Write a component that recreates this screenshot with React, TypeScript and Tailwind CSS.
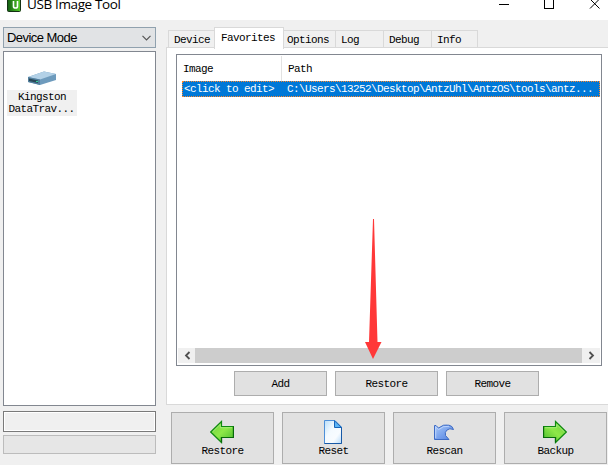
import React from 'react';

const mono = "font-['Liberation_Mono',monospace] text-[11px] leading-[12px] tracking-[-0.6px] whitespace-pre text-black";

function Tab({ label, className }: { label: string; className: string }) {
  return (
    <div className={`h-[18px] border border-b-0 border-[#d9d9d9] pt-[3px] ${mono} ${className}`}>{label}</div>
  );
}

function SmallButton({ label, className }: { label: string; className: string }) {
  return (
    <button className={`flex h-[25px] items-center justify-center border border-[#adadad] bg-[#e1e1e1] ${mono} ${className}`}>
      {label}
    </button>
  );
}

function ActionButton({ label, children }: { label: string; children: React.ReactNode }) {
  return (
    <button className="flex h-[52px] w-[103px] shrink-0 flex-col items-center border border-[#adadad] bg-[#e1e1e1] pt-[7px]">
      <span className="mr-px h-[25px] w-6">{children}</span>
      <span className={mono}>{label}</span>
    </button>
  );
}

function GreenArrow({ flip }: { flip?: boolean }) {
  return (
    <svg width="24" height="24" viewBox="0 0 24 24" className={flip ? '-scale-x-100' : ''}>
      <defs>
        <linearGradient id="green" x1="0" y1="0" x2="1" y2="1">
          <stop offset="0" stopColor="#6ccf3e" />
          <stop offset=".5" stopColor="#8ee848" />
          <stop offset="1" stopColor="#45b82c" />
        </linearGradient>
      </defs>
      <path d="M.7 12 11.5 1.5V6.5H23.5V17.5H11.5V22.5Z" fill="url(#green)" stroke="#108a10" strokeWidth="1.2" />
      <path d="M11.5 22.5V17.5H23.5V6.5" fill="none" stroke="#07680b" strokeWidth="1.2" />
      <path d="M2.5 12 10.3 4.3V7.7H22" fill="none" stroke="#a9ee80" strokeWidth=".8" />
    </svg>
  );
}

function PageIcon() {
  return (
    <svg width="24" height="24" viewBox="0 0 24 24">
      <defs>
        <linearGradient id="page" x1="0" y1="0" x2="1" y2="1">
          <stop offset="0" stopColor="#b9defa" />
          <stop offset=".4" stopColor="#f3faff" />
          <stop offset=".7" stopColor="#f8fcff" />
          <stop offset="1" stopColor="#b5dafa" />
        </linearGradient>
      </defs>
      <path d="M3.5.5H14L20.500 7V23.500H3.500Z" fill="url(#page)" stroke="#4d8fd8" />
      <path d="M20.500 7V23.500H3.500" fill="none" stroke="#1759a6" />
      <path d="M13.500.8V7.500H20.500Z" fill="#5cb4f5" stroke="#1664b9" />
    </svg>
  );
}

function RescanIcon() {
  return (
    <svg width="24" height="24" viewBox="0 0 24 24">
      <defs>
        <linearGradient id="rescan" x1="0" y1="0" x2="1" y2="1">
          <stop offset="0" stopColor="#a9c9fa" />
          <stop offset="1" stopColor="#4f7fdf" />
        </linearGradient>
      </defs>
      <path
        d="M2.500 5.500H4L6.500 8Q11.500 3.800 17 5.200Q20.500 5.800 21.500 9.500Q17.500 7.800 15 10Q12.500 12 13.500 15.500L17 19.500H2.500Z"
        fill="url(#rescan)" stroke="#3e6bc4"
      />
      <path d="M3.700 18V7L6.500 9.600Q11 5.500 17 6.300" fill="none" stroke="#c6dcff" strokeWidth=".8" />
    </svg>
  );
}

export default function App() {
  return (
    <div className="relative flex h-[465px] w-[608px] flex-col overflow-hidden bg-[#f0f0f0]">
      <header className="flex h-5 shrink-0 bg-white">
        <svg width="14" height="12" viewBox="0 0 14 12" className="ml-[7px] shrink-0">
          <defs>
            <linearGradient id="logo" x1="0" y1="0" x2="1" y2="0">
              <stop offset="0" stopColor="#125b12" />
              <stop offset="1" stopColor="#54cf28" />
            </linearGradient>
          </defs>
          <rect x=".5" y="-4" width="13" height="15.500" rx="1" fill="url(#logo)" stroke="#143014" />
          <path d="M6.500 1V6.500Q6.500 8 8.500 8T10.500 6.500V1" fill="none" stroke="white" strokeWidth="1.600" />
        </svg>
        <h1 className="-mt-[3px] ml-[6px] h-[14px] w-[105px] shrink-0 whitespace-nowrap font-['Open_Sans',sans-serif] text-[13.5px] leading-[14px] tracking-[-0.37px] text-black">USB Image Tool</h1>
        <svg width="109" height="12" viewBox="0 0 109 12" className="ml-auto shrink-0" fill="none" stroke="black" shapeRendering="crispEdges">
          <path d="M0 4.500H10M45.500-1V8.500H54.500V-1" />
          <path d="m91-1 9.500 9.500M100.500-1 91 8.500" shapeRendering="auto" />
        </svg>
      </header>

      <main className="flex min-h-0 flex-1">
        <aside className="w-[166px] shrink-0 pl-[3px] pt-[7px]">
          <button className="flex h-[21px] w-[153px] items-center justify-between border border-[#90a1ae] bg-[#e1e3e5] pl-[3px] pr-1 font-['Liberation_Sans',sans-serif] text-[12px] tracking-[-0.55px] text-black">
            <span className="text-[13px]">Device Mode</span>
            <svg width="9" height="6" viewBox="0 0 9 6" fill="none" stroke="#555" strokeWidth="1.200"><path d="m.5.8 4 4 4-4" /></svg>
          </button>
          <div className="mt-[3px] h-[355px] w-[153px] border border-[#828790] bg-white pl-[3px] pt-[18px]">
            <div className="flex w-[70px] flex-col items-center">
              <svg width="30" height="16" viewBox="0 0 30 16">
                <path d="m1 7 16-5.500 12 2.500v6L13 15 1 12Z" fill="#6e9bbd" />
                <path d="m1 7 16-5.500 12 2.500-16 5.500Z" fill="#b3d1e7" />
                <path d="m1 7 12 2.500V15L1 12Z" fill="#54809e" />
                <path d="m2 8.500 9 2v2.500L2 11Z" fill="#294858" />
                <path d="M9 11h2v1h-2Z" fill="#35d49a" />
              </svg>
              <div className={`mt-[4px] h-[26px] w-[70px] bg-[#f0f0f0] pt-px text-center ${mono}`}>
                <div>Kingston</div>
                <div className="pr-px">DataTrav...</div>
              </div>
            </div>
          </div>
          <div className="mt-[5px] h-[21px] w-[153px] border border-[#7a7a7a] bg-[#f0f0f0] shadow-[inset_0_0_0_1px_white]" />
          <div className="mt-[3px] h-[19px] w-[153px] border border-[#bcbcbc] bg-[#e6e6e6]" />
        </aside>

        <section className="w-[442px] shrink-0 pt-[7px]">
          <div className="flex h-[21px] items-end pl-[2px]">
            <Tab label="Device" className="w-[47px] pl-[5px]" />
            <div className={`relative z-10 -ml-px -mb-px h-[22px] w-[70px] border border-b-0 border-[#d9d9d9] bg-white pl-[6px] pt-1 ${mono}`}>Favorites</div>
            <Tab label="Options" className="-ml-px w-[53px] pl-[3px]" />
            <Tab label="Log" className="-ml-px w-[49px] pl-[5px]" />
            <Tab label="Debug" className="-ml-px w-[49px] pl-[5px]" />
            <Tab label="Info" className="-ml-px w-[47px] pl-[5px]" />
          </div>
          <div className="-mt-px h-[358px] border border-r-0 border-[#d9d9d9] bg-white pl-[9px] pt-[6px]">
            <div className="flex h-[312px] w-[426px] flex-col border border-[#828790] bg-white p-px">
              <div className={`flex h-[25px] ${mono}`}>
                <div className="w-[104px] border-r border-[#e2e2e2] pl-[5px] pt-[7px]">Image</div>
                <div className="pl-[6px] pt-[7px]">Path</div>
              </div>
              <div className={`ml-1 flex h-4 w-[418px] items-center border border-dotted border-[#ff872a] bg-[#0078d7] ${mono} text-white!`}>
                <span className="w-[104px] pl-px">&lt;click to edit&gt;</span>
                <span>C:\Users\13252\Desktop\AntzUhl\AntzOS\tools\antz...</span>
              </div>
              <div className="mt-auto mb-px flex h-[15px] bg-[#f0f0f0]">
                <svg width="17" height="15" fill="none" stroke="#505050" strokeWidth="1.800"><path d="m11.500 4-3.500 3.500 3.500 3.500" /></svg>
                <div className="h-[15px] w-[387px] bg-[#cdcdcd]" />
                <svg width="18" height="15" fill="none" stroke="#505050" strokeWidth="1.800"><path d="m7.500 4 3.500 3.500L7.500 11" /></svg>
              </div>
            </div>
            <div className="mt-[5px] flex gap-2 pl-[58px]">
              <SmallButton label="Add" className="w-[93px]" />
              <SmallButton label="Restore" className="w-[103px]" />
              <SmallButton label="Remove" className="w-[93px]" />
            </div>
          </div>
          <div className="mt-[7px] flex gap-2 pl-[5px]">
            <ActionButton label="Restore"><GreenArrow /></ActionButton>
            <ActionButton label="Reset"><PageIcon /></ActionButton>
            <ActionButton label="Rescan"><RescanIcon /></ActionButton>
            <ActionButton label="Backup"><GreenArrow flip /></ActionButton>
          </div>
        </section>
      </main>
      <svg width="18" height="142" viewBox="0 0 18 142" className="absolute left-[364px] top-[218px]">
        <path d="M9 1h1l3.500 123h4L9 141 1 124h4Z" fill="#ff3838" />
      </svg>
    </div>
  );
}
